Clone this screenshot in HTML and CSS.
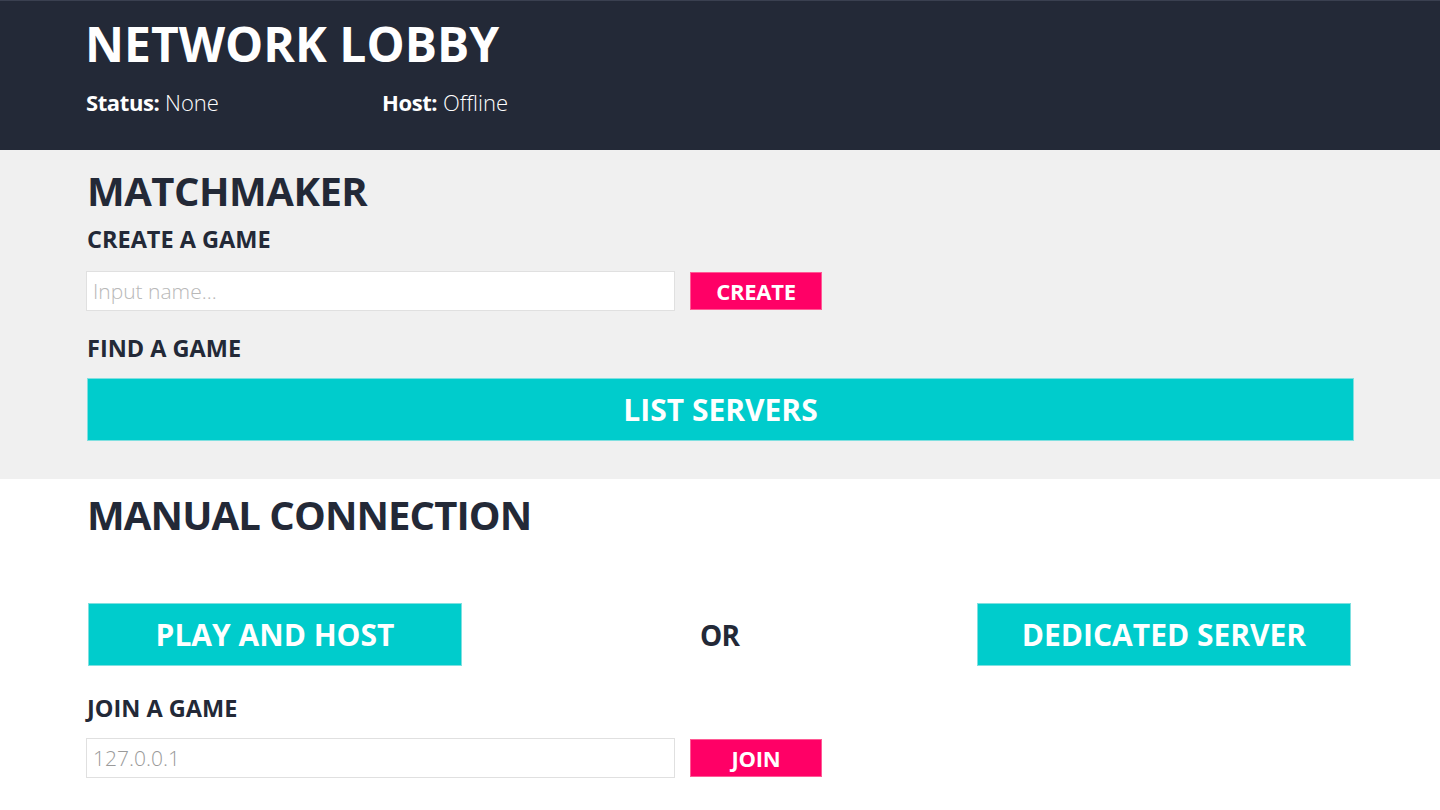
FILE: index.html
```html
<!DOCTYPE html>
<html>
<head>
<meta charset="utf-8">
<link rel="stylesheet" href="styles.css">
</head>
<body>
<header class="lobby-header">
  <h1 class="lobby-title">NETWORK LOBBY</h1>
  <div class="status-row">
    <div class="status-item"><b>Status:</b> <span>None</span></div>
    <div class="status-item"><b>Host:</b> <span>Offline</span></div>
  </div>
</header>
<section class="matchmaker">
  <h2 class="section-title">MATCHMAKER</h2>
  <h3 class="sub-title first">CREATE A GAME</h3>
  <div class="input-row">
    <input class="text-input" type="text" placeholder="Input name...">
    <button class="btn-pink">CREATE</button>
  </div>
  <h3 class="sub-title find">FIND A GAME</h3>
  <button class="btn-cyan btn-wide">LIST SERVERS</button>
</section>
<section class="manual">
  <h2 class="section-title manual-title">MANUAL CONNECTION</h2>
  <div class="host-row">
    <button class="btn-cyan btn-host">PLAY AND HOST</button>
    <span class="or">OR</span>
    <button class="btn-cyan btn-host">DEDICATED SERVER</button>
  </div>
  <h3 class="sub-title">JOIN A GAME</h3>
  <div class="input-row">
    <input class="text-input ip" type="text" value="127.0.0.1">
    <button class="btn-pink">JOIN</button>
  </div>
</section>
</body>
</html>
```

FILE: styles.css
```css
* { box-sizing: border-box; }
html, body { margin: 0; padding: 0; }
body {
  font-family: "Open Sans", "Noto Sans", sans-serif;
  background: #ffffff;
  color: #232937;
  width: 1440px;
  height: 810px;
  overflow: hidden;
}
h1, h2, h3 { margin: 0; }

.lobby-header {
  background: #232937;
  border-top: 1px solid #3a4050;
  height: 150px;
  padding: 17px 86px 0 85px;
  color: #ffffff;
}
.lobby-title {
  font-size: 48px;
  font-weight: 700;
  line-height: 52px;
}
.status-row {
  display: flex;
  margin-top: 20px;
  font-size: 22px;
  line-height: 24px;
  padding-left: 1px;
}
.status-item { width: 296px; }
.status-item b { font-weight: 700; letter-spacing: -0.4px; }
.status-item span { font-weight: 300; }

.matchmaker {
  background: #f0f0f0;
  height: 329px;
  padding: 16px 87px 0 86px;
}
.section-title {
  font-size: 40px;
  font-weight: 700;
  line-height: 50px;
  letter-spacing: -0.5px;
  padding-left: 1px;
}
.manual-title { letter-spacing: -0.9px; }
.sub-title {
  font-size: 23.5px;
  font-weight: 700;
  line-height: 26px;
  padding-left: 1px;
  letter-spacing: 0;
}
.sub-title.first { margin-top: 10px; }
.sub-title.find { margin-top: 24px; }

.input-row {
  display: flex;
  align-items: center;
  gap: 15px;
  margin-top: 19px;
}
.text-input {
  width: 589px;
  height: 40px;
  border: 1px solid #e0e0e0;
  background: #ffffff;
  font-family: "Open Sans", sans-serif;
  font-weight: 300;
  font-size: 21px;
  padding: 0 6px;
  color: #999999;
  outline: none;
}
.text-input::placeholder { color: #b8b8b8; }
.btn-pink {
  width: 132px;
  height: 38px;
  margin-top: -1px;
  background: #ff0066;
  border: 1px solid #ff5a95;
  color: #ffffff;
  font-family: "Open Sans", sans-serif;
  font-weight: 700;
  font-size: 22px;
  padding: 0;
  letter-spacing: -0.3px;
}
.btn-cyan {
  background: #00cccc;
  border: 1px solid #7fe0e0;
  color: #ffffff;
  font-family: "Open Sans", sans-serif;
  font-weight: 700;
  padding: 0;
}
.btn-wide {
  display: block;
  width: 1267px;
  height: 63px;
  margin-top: 17px;
  margin-left: 1px;
  font-size: 30px;
}

.manual {
  padding: 11px 87px 0 86px;
}
.host-row {
  display: flex;
  align-items: center;
  justify-content: space-between;
  padding: 0 2px;
  margin-top: 63px;
}
.btn-host {
  width: 374px;
  height: 63px;
  font-size: 30px;
}
.or {
  font-size: 28px;
  font-weight: 700;
  letter-spacing: -0.8px;
}
.manual .sub-title { margin-top: 29px; }
.manual .input-row { margin-top: 17px; }
.text-input.ip { color: #9a9a9a; }
```
